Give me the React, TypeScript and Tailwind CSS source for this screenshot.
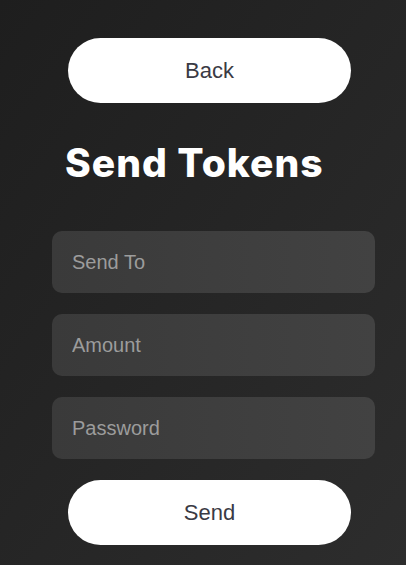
import { useState } from 'react';

const fields = [
  { name: 'to', placeholder: 'Send To', type: 'text' },
  { name: 'amount', placeholder: 'Amount', type: 'text' },
  { name: 'password', placeholder: 'Password', type: 'password' },
];

const SendTokens = () => {
  const [values, setValues] = useState<Record<string, string>>({});

  return (
    <div className="min-h-[565px] w-full bg-gradient-to-br from-[#1e1e1e] to-[#2d2d2d] font-['Liberation_Sans',Arial,sans-serif]">
      <div className="flex flex-col pt-[38px] pl-[52px] w-[375px]">
        {/* Back */}
        <button className="ml-4 h-[65px] w-[283px] rounded-full bg-white text-[22px] text-[#3a3a44]">
          Back
        </button>

        <h1 className="mt-[31px] ml-[13px] h-[58px] font-['Inter',sans-serif] text-[39px] font-extrabold leading-[58px] tracking-[1px] text-white">
          Send Tokens
        </h1>

        <div className="mt-[39px] flex flex-col gap-[21px]">
          {fields.map((f) => (
            <input
              key={f.name}
              type={f.type}
              placeholder={f.placeholder}
              value={values[f.name] || ''}
              onChange={(e) => setValues({ ...values, [f.name]: e.target.value })}
              className="h-[62px] w-[323px] rounded-[10px] bg-gradient-to-r from-[#3a3a3a] to-[#424242] px-5 text-[20px] text-white outline-none placeholder:text-[#9c9c9c]"
            />
          ))}
        </div>

        <button className="ml-4 mt-[21px] h-[65px] w-[283px] rounded-full bg-white text-[22px] text-[#3a3a44]">
          Send
        </button>
      </div>
    </div>
  );
};

export default SendTokens;
